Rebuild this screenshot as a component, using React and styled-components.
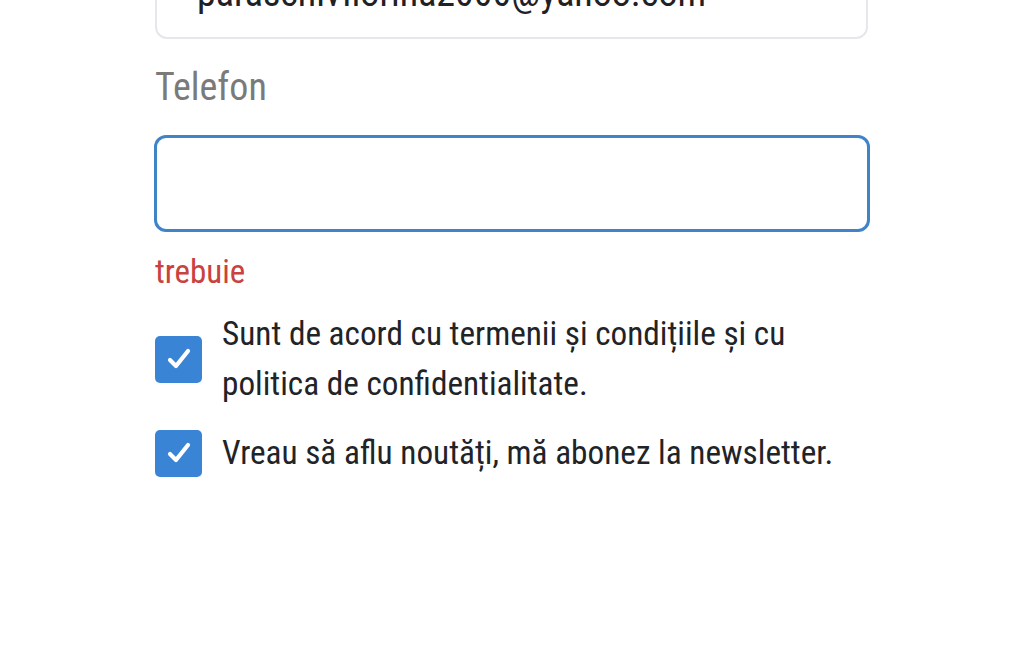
import React from "react"
import styled, { createGlobalStyle } from "styled-components"

const GlobalStyle = createGlobalStyle`
  html, body {
    margin: 0;
    padding: 0;
    background: #ffffff;
    overflow: hidden;
  }
  body {
    font-family: Roboto, "Liberation Sans", sans-serif;
    font-stretch: 80%;
  }
`

const Form = styled.div`
  display: flex;
  flex-direction: column;
  width: 716px;
  margin-top: -57px;
  margin-left: 154px;
`

const Input = styled.div`
  box-sizing: border-box;
  height: ${(p) => (p.$focused ? "97px" : "96px")};
  border: ${(p) => (p.$focused ? "3px solid #3f84c6" : "2px solid #e6e7ea")};
  border-radius: 12px;
  display: flex;
  align-items: center;
  padding-left: 40px;
  padding-top: 4px;
  font-size: 38px;
  color: #1f2125;
  margin-right: ${(p) => (p.$focused ? "0" : "2px")};
  margin-left: ${(p) => (p.$focused ? "0" : "1px")};
`

const Label = styled.div`
  font-size: 38px;
  color: #7a7a7a;
  line-height: 44px;
  margin-top: 26px;
  margin-bottom: 26px;
  margin-left: 1px;
`

const Error = styled.div`
  font-size: 33px;
  color: #c9423f;
  line-height: 40px;
  margin-top: 20px;
  margin-left: 1px;
`

const CheckRow = styled.label`
  display: flex;
  align-items: center;
  gap: 20px;
  margin-top: ${(p) => p.$top};
  margin-left: 1px;
`

const Box = styled.span`
  flex: none;
  width: 47px;
  height: 47px;
  border-radius: 5px;
  background: #3a84d5;
  display: flex;
  align-items: center;
  justify-content: center;
`

const CheckText = styled.span`
  font-size: 33.25px;
  line-height: 50px;
  color: #212327;
  max-width: 620px;
`

const Tick = () => (
  <svg width="30" height="30" viewBox="0 0 30 30">
    <path
      d="M6 16 L12 22 L24 7"
      fill="none"
      stroke="#ffffff"
      strokeWidth="4.2"
      strokeLinecap="round"
      strokeLinejoin="round"
    />
  </svg>
)

export default function App() {
  return (
    <>
      <GlobalStyle />
      <Form>
        <Input>paraschivflorina2000@yahoo.com</Input>
        <Label>Telefon</Label>
        <Input $focused />
        <Error>trebuie</Error>
        <CheckRow $top="17px">
          <Box>
            <Tick />
          </Box>
          <CheckText>
            Sunt de acord cu termenii și condițiile și cu politica de
            confidentialitate.
          </CheckText>
        </CheckRow>
        <CheckRow $top="19px">
          <Box>
            <Tick />
          </Box>
          <CheckText>Vreau să aflu noutăți, mă abonez la newsletter.</CheckText>
        </CheckRow>
      </Form>
    </>
  )
}
